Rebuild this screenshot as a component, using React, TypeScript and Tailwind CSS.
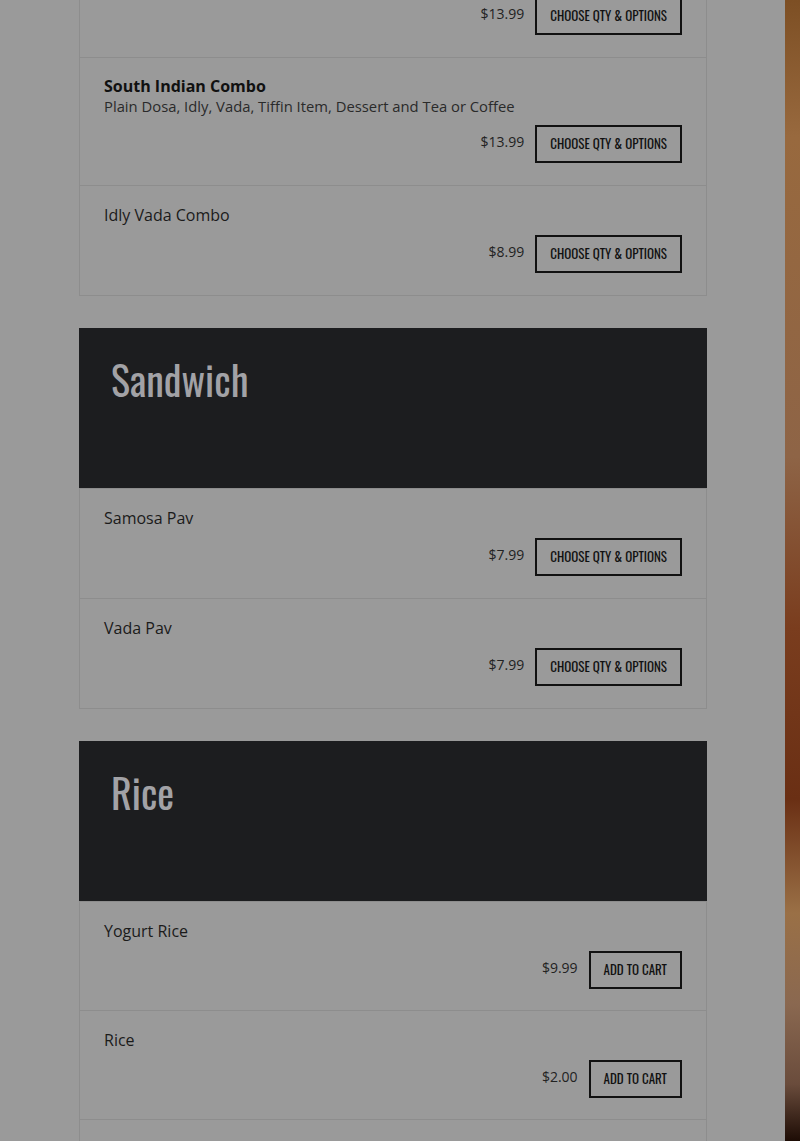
import React from 'react'

type Item = {
  name: string
  desc?: string
  price: string
  bold?: boolean
  cart?: boolean
}

const sections: { title?: string; items: Item[] }[] = [
  {
    items: [
      { name: 'Mini Tiffin Combo', price: '$13.99' },
      {
        name: 'South Indian Combo',
        desc: 'Plain Dosa, Idly, Vada, Tiffin Item, Dessert and Tea or Coffee',
        price: '$13.99',
        bold: true,
      },
      { name: 'Idly Vada Combo', price: '$8.99' },
    ],
  },
  {
    title: 'Sandwich',
    items: [
      { name: 'Samosa Pav', price: '$7.99' },
      { name: 'Vada Pav', price: '$7.99' },
    ],
  },
  {
    title: 'Rice',
    items: [
      { name: 'Yogurt Rice', price: '$9.99', cart: true },
      { name: 'Rice', price: '$2.00', cart: true },
      { name: 'Tamarind Rice', price: '$9.99', cart: true },
    ],
  },
]

const narrow = "font-['Oswald','Liberation_Sans_Narrow','DejaVu_Sans_Condensed',sans-serif]"

const MenuRow = ({ item }: { item: Item }) => {
  return (
    <div className={`border-t border-[#8d8d8d] first:border-t-0 pt-[17px] px-[24px] ${item.cart ? 'pb-[21px]' : 'pb-[22px]'}`}>
      <div className={item.bold ? 'text-[16px] leading-[22px] font-bold text-[#111]' : 'text-[16px] leading-[24px] text-[#1b1b1b]'}>
        {item.name}
      </div>
      {item.desc && <div className="text-[14.8px] leading-[19px] text-[#2a2a2a]">{item.desc}</div>}
      <div className={`flex justify-end items-start gap-[11px] ${item.desc ? 'mt-[9px]' : 'mt-[8px]'}`}>
        <span className="mt-[7px] text-[14px] leading-[20px] text-[#222]">{item.price}</span>
        <button
          className={`${narrow} h-[38px] border-2 border-[#111] px-[13px] text-[13px] uppercase text-[#111]`}
        >
          {item.cart ? 'Add to cart' : 'Choose qty & options'}
        </button>
      </div>
    </div>
  )
}

export default function App() {
  return (
    <div className="flex h-[1141px] overflow-hidden bg-[#9a9a9a] font-['Open_Sans',sans-serif]">
      <div className="flex-1">
        <div className="ml-[79px] w-[628px] -mt-[53px]">
          {sections.map((s, i) => (
            <div key={i} className={i > 0 ? 'mt-[32px]' : ''}>
              {s.title && (
                <div className="h-[160px] bg-[#1c1d1f] pl-[32px] pt-[24px]">
                  <h2 className={`${narrow} text-[40px] leading-[54px] text-[#a2a2a6]`}>{s.title}</h2>
                </div>
              )}
              <div className="border border-[#8d8d8d]">
                {s.items.map((item, j) => (
                  <MenuRow key={j} item={item} />
                ))}
              </div>
            </div>
          ))}
        </div>
      </div>
      <div className="w-[15px] bg-[linear-gradient(to_bottom,#7d4f24,#98693e_12%,#8e6446_40%,#7a3d1e_55%,#6a2f14_70%,#9a7046_80%,#8a6850_88%,#6a4c3c_95%,#1d0c05)]" />
    </div>
  )
}
